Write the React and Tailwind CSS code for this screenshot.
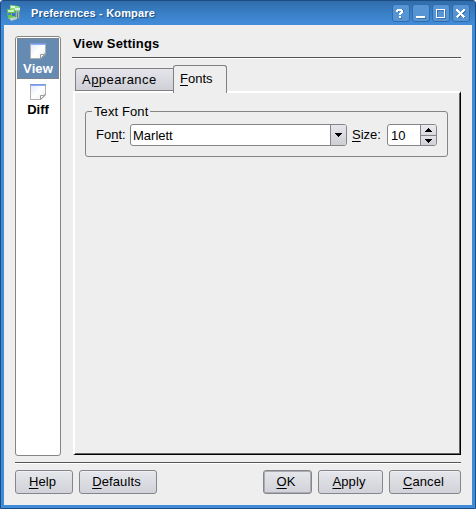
import React from 'react';

function Mnemonic({ before = '', letter, after, className = '' }) {
  return (
    <span className={`whitespace-pre ${className}`}>
      {before}
      <span className="underline decoration-1 underline-offset-2">{letter}</span>
      {after}
    </span>
  );
}

function TitleButton({ children }) {
  return (
    <div className="h-[18px] w-[18px] rounded-[3px] border border-[#306bac] bg-[#5794d3]">
      <svg width="16" height="16" viewBox="1 0 16 16" fill="none" shapeRendering="crispEdges">
        {children}
      </svg>
    </div>
  );
}

function ArrowDown() {
  return (
    <svg width="7" height="4" viewBox="0 0 7 4" shapeRendering="crispEdges">
      <path d="M0 0H7V1H6V2H5V3H4V4H3V3H2V2H1V1H0Z" />
    </svg>
  );
}

function ArrowUp() {
  return (
    <svg width="7" height="4" viewBox="0 0 7 4" shapeRendering="crispEdges">
      <path d="M0 4H7V3H6V2H5V1H4V0H3V1H2V2H1V3H0Z" />
    </svg>
  );
}

function AppIcon() {
  return (
    <svg width="14" height="16" viewBox="0 0 14 16">
      <path d="M3 3H13V14H4Z" fill="#5d8f9c" />
      <path d="M3 0L11 1L13 2V6H3Z" fill="#8fdc7c" />
      <path d="M4 1H8V3H4Z" fill="#e4f7df" />
      <path d="M8 3H13V5H8Z" fill="#dcefe4" />
      <path d="M9 6H12V13H9Z" fill="#93b9b0" />
      <path d="M10 7H11V13H10Z" fill="#5f8490" />
      <path d="M0 4L8 5V13L1 14Z" fill="#62c94c" />
      <path d="M1 5H7V7H1Z" fill="#cdeec6" />
      <path d="M1 8H4V10H1Z" fill="#4f7fd0" />
      <path d="M5 8H8V11H5Z" fill="#4470c0" />
      <path d="M2 13L10 12V14L4 16Z" fill="#bccfcb" />
    </svg>
  );
}

function PageIcon() {
  return (
    <svg width="16" height="16" viewBox="0 0 16 16">
      <defs>
        <linearGradient id="paper" x1="0" y1="0" x2="1" y2="1">
          <stop offset="0" stopColor="#dfe7fb" />
          <stop offset="0.5" stopColor="#ffffff" />
          <stop offset="1" stopColor="#eeeeee" />
        </linearGradient>
      </defs>
      <path d="M.5 .5H15.5V11L11 15.5H.5Z" fill="url(#paper)" stroke="#b0b0b0" />
      <path d="M0 0H16V1H0Z" fill="#7b98d9" />
      <path d="M1 1H15V2H1Z" fill="#8caef8" />
      <path d="M10.5 15.5V11.5Q13 12 15.5 10.5Z" fill="#f4f4f4" stroke="#9a9a9a" />
    </svg>
  );
}

function PushButton({ width, isDefault, children }) {
  return (
    <div
      className={`flex h-6 items-center justify-center rounded-[3px] border border-[#85868b] bg-linear-to-b from-[#e6e7ec] to-[#d1d2d9] pr-[3px] tracking-[0.12px] ${
        isDefault ? 'shadow-[inset_0_0_0_1px_#acadb3]' : 'shadow-[inset_0_1px_0_#f1f1f4]'
      } ${width}`}
    >
      {children}
    </div>
  );
}

export default function App() {
  return (
    <div className="flex h-[509px] w-[476px] flex-col overflow-hidden rounded-t-[3px] border border-[#1d4c83] bg-[#418cd8] font-['Liberation_Sans',Arial,sans-serif] text-[13px] leading-4 text-black">
      <header className="flex h-6 shrink-0 items-start bg-linear-to-b from-[#316eae] from-5% via-[#397fc5] to-[#428cda] pl-[6px] pr-[5px] pt-[3px]">
        <div className="pt-px"><AppIcon /></div>
        <h1 className="ml-[10px] mt-px flex-1 whitespace-pre text-[11px] font-bold tracking-[0.17px] text-white [text-shadow:1px_1px_1px_#174a83]">
          Preferences - Kompare
        </h1>
        <div className="flex gap-[2px]">
          <TitleButton>
            <path d="M5 5H7V4H10V7H9V8H8V9H7V10H9V9H10V8H11V7H12V5H11V4H10V5H9V6H7V7H5ZM7 12H10V14H7Z" fill="#174a83" opacity=".4" />
            <path d="M4 5H5V4H10V5H11V8H10V9H9V10H7V8H8V7H9V6H6V7H4ZM7 11H9V13H7Z" fill="#fff" />
          </TitleButton>
          <TitleButton>
            <path d="M5 12H14V14H5Z" fill="#3973b0" />
            <path d="M4 11H13V13H4Z" fill="#fff" />
          </TitleButton>
          <TitleButton>
            <path d="M5 5H14V14H5Z" fill="#3973b0" />
            <path d="M4 4H13V13H4Z" fill="#fff" />
            <path d="M5 5H12V12H5Z" fill="#3973b0" />
            <path d="M6 6H12V12H6Z" fill="#5794d3" />
          </TitleButton>
          <TitleButton>
            <path d="M6 6L13 13M13 6L6 13" stroke="#3973b0" strokeWidth="2.4" />
            <path d="M4.5 4.5L12.5 12.5M12.5 4.5L4.5 12.5" stroke="#fff" strokeWidth="2.4" />
          </TitleButton>
        </div>
      </header>

      <main className="mx-[3px] mb-[3px] flex flex-1 flex-col bg-[#eeeeee] pl-[11px] pr-[11px] pt-[11px]">
        <div className="flex h-[420px] gap-[11px]">
          <aside className="h-[420px] w-[46px] shrink-0 rounded-[3px] border border-[#858585] bg-white p-px text-center font-bold">
            <div className="flex h-[41px] flex-col items-center border border-dotted border-[#917c70] bg-[#658bb3] pt-1 text-white">
              <PageIcon />
              <span className="mt-[2px] tracking-[0.1px]">View</span>
            </div>
            <div className="flex h-[41px] flex-col items-center pt-[5px]">
              <PageIcon />
              <span className="mt-[2px]">Diff</span>
            </div>
          </aside>

          <section className="flex w-[389px] flex-col pb-px">
            <h2 className="h-[21px] pl-px font-bold tracking-[0.17px]">View Settings</h2>
            <div className="h-[2px] border-t border-[#555] bg-white" />
            <div className="mt-[7px] flex h-[25px] items-end pl-[3px]">
              <div className="h-[23px] w-[98px] rounded-tl-[3px] border border-r-0 border-[#808085] bg-linear-to-b from-[#e5e5eb] to-[#cfcfd7] pl-[6px] pt-[3px]">
                <Mnemonic before="A" letter="p" after="pearance" className="tracking-[0.45px]" />
              </div>
              <div className="z-10 -mb-[2px] h-[28px] w-[54px] rounded-t-[3px] border border-b-0 border-[#808085] bg-[#eeeeee] pl-[6px] pt-[5px]">
                <Mnemonic letter="F" after="onts" />
              </div>
            </div>
            <div className="ml-px flex-1 border-b border-l-2 border-r border-t-2 border-b-black border-l-white border-r-black border-t-white">
              <div className="h-full border-b border-r border-[#666] pl-[10px] pr-[11px] pt-[18px]">
                <fieldset className="relative h-[46px] rounded-[3px] border border-[#858585] pl-[10px] pt-3">
                  <span className="absolute -top-[8px] left-[6px] bg-[#eeeeee] px-[2px] tracking-[0.1px]">Text Font</span>
                  <div className="flex h-[22px] items-center">
                    <Mnemonic before="Fo" letter="n" after="t:" className="w-[34px]" />
                    <div className="flex h-[22px] w-[217px] overflow-hidden rounded-[3px] border border-[#858589] bg-white">
                      <span className="flex-1 pl-[2px] pt-[3px]">Marlett</span>
                      <span className="flex w-4 items-center justify-center border-l border-[#858589] bg-linear-to-b from-[#e6e6ec] to-[#ceced5]">
                        <ArrowDown />
                      </span>
                    </div>
                    <Mnemonic letter="S" after="ize:" className="ml-[5px] w-[35px]" />
                    <div className="flex h-[22px] w-[50px] overflow-hidden rounded-[3px] border border-[#858589] bg-white">
                      <span className="flex-1 pl-[3px] pt-[3px]">10</span>
                      <span className="flex w-4 flex-col border-l border-[#858589]">
                        <span className="flex h-[10px] items-center justify-center bg-linear-to-b from-[#ebebf0] to-[#d9d9e0]">
                          <ArrowUp />
                        </span>
                        <span className="flex h-[10px] items-center justify-center border-t border-[#858589] bg-linear-to-b from-[#e2e2e8] to-[#cfcfd6]">
                          <ArrowDown />
                        </span>
                      </span>
                    </div>
                  </div>
                </fieldset>
              </div>
            </div>
          </section>
        </div>

        <div className="mt-[6px] h-[2px] border-t border-[#555] bg-white" />
        <footer className="mt-[6px] flex gap-[6px]">
          <PushButton width="w-[58px]"><Mnemonic letter="H" after="elp" /></PushButton>
          <PushButton width="w-[78px]"><Mnemonic letter="D" after="efaults" /></PushButton>
          <div className="flex-1" />
          <PushButton width="w-[49px]" isDefault><Mnemonic letter="O" after="K" /></PushButton>
          <PushButton width="w-[65px]"><Mnemonic letter="A" after="pply" /></PushButton>
          <PushButton width="w-[72px]"><Mnemonic letter="C" after="ancel" /></PushButton>
        </footer>
      </main>
    </div>
  );
}
